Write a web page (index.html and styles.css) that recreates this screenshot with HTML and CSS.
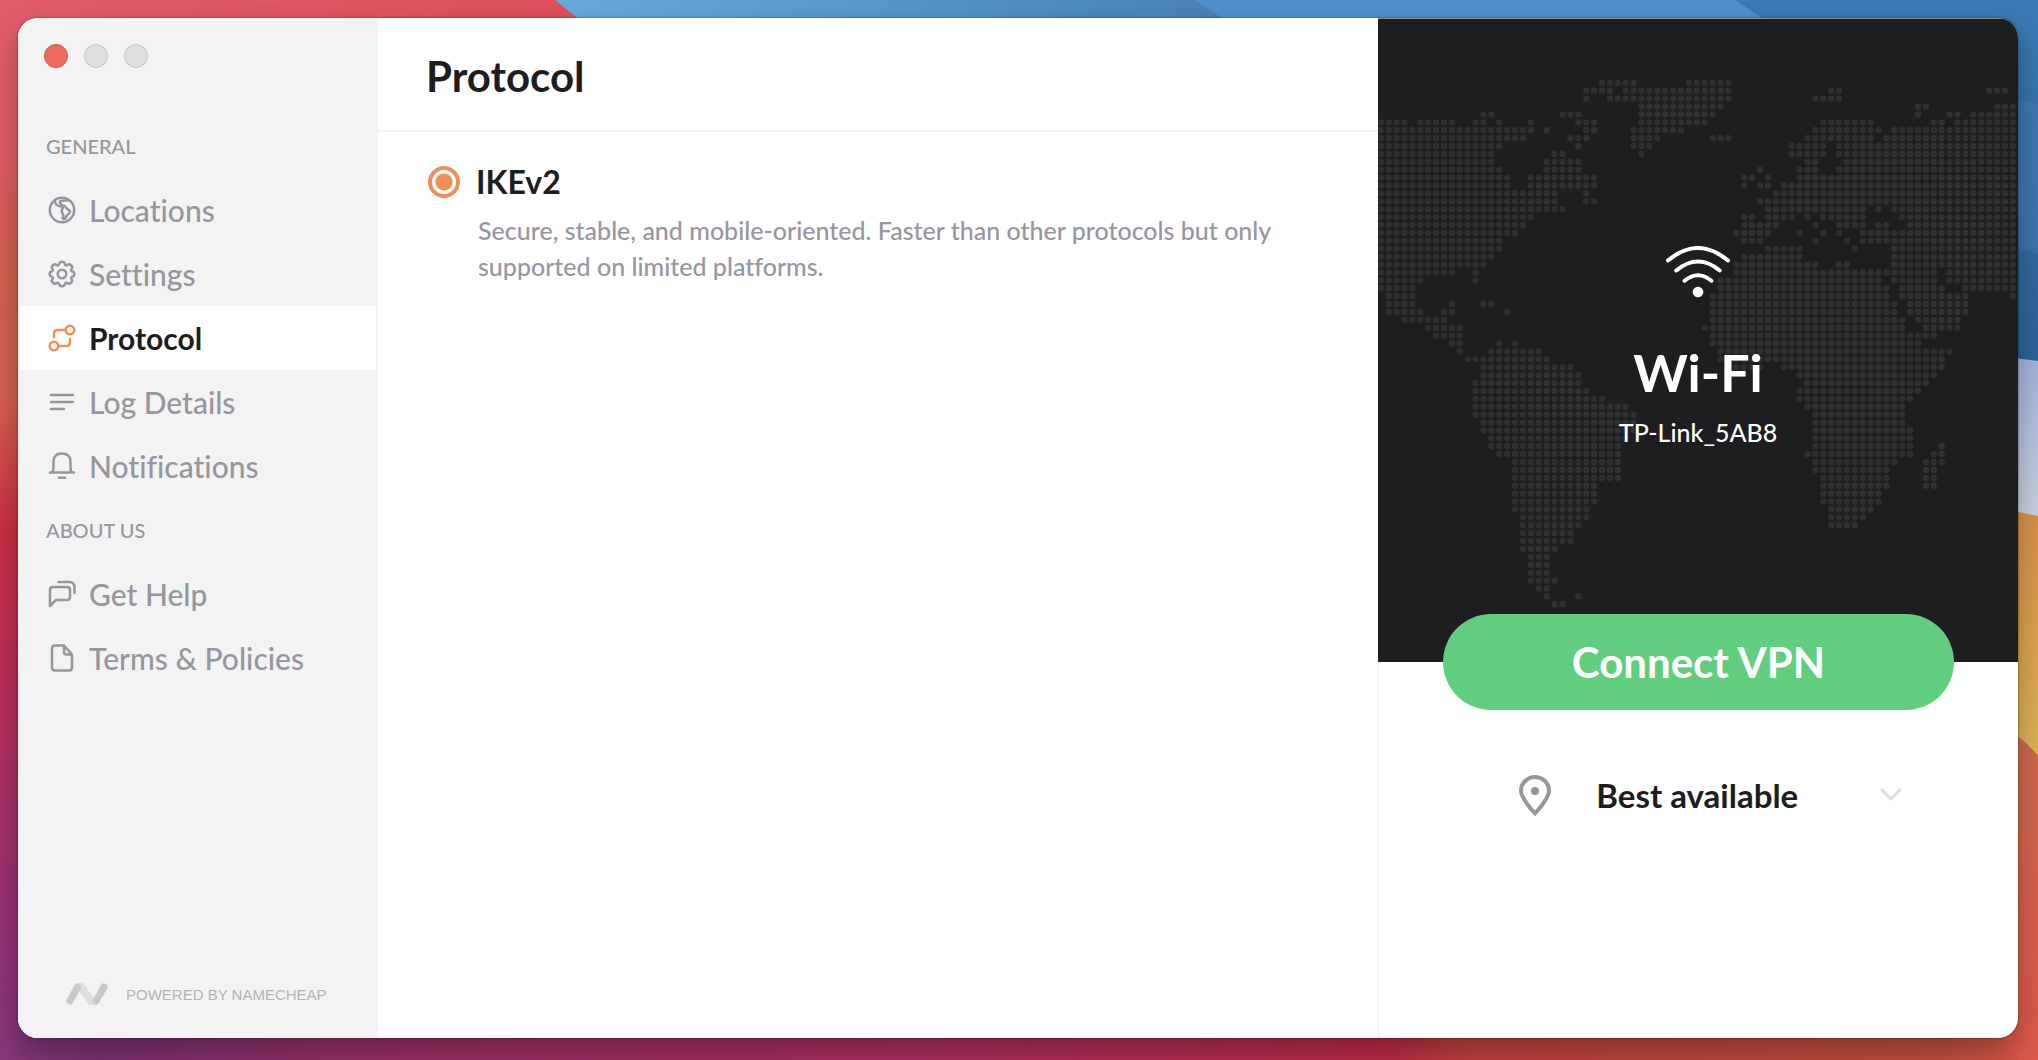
FILE: index.html
```
<!DOCTYPE html>
<html lang="en">
<head>
    <meta charset="UTF-8">
    <meta name="viewport" content="width=device-width, initial-scale=1.0">
    <title>Protocol</title>
    <link rel="stylesheet" href="styles.css">
</head>
<body>
    <svg class="wallpaper" viewBox="0 0 2038 1060" preserveAspectRatio="none" aria-hidden="true">
        <defs>
            <linearGradient id="left" x1="0" y1="0" x2="0" y2="1">
                <stop offset="0" stop-color="#e25d6e"/>
                <stop offset=".12" stop-color="#e05c68"/>
                <stop offset=".26" stop-color="#d4614f"/>
                <stop offset=".38" stop-color="#d6604f"/>
                <stop offset=".5" stop-color="#cb2f43"/>
                <stop offset=".66" stop-color="#b92f5c"/>
                <stop offset=".88" stop-color="#943276"/>
                <stop offset="1" stop-color="#853879"/>
            </linearGradient>
            <linearGradient id="top">
                <stop offset="0" stop-color="#e25d6e"/>
                <stop offset="1" stop-color="#dd4f5a"/>
            </linearGradient>
            <linearGradient id="sky">
                <stop offset="0" stop-color="#68abdd"/>
                <stop offset="1" stop-color="#4580b5"/>
            </linearGradient>
            <linearGradient id="deep" x1="0" y1="0" x2="0" y2="1">
                <stop offset="0" stop-color="#3b7ab5"/>
                <stop offset="1" stop-color="#2d6297"/>
            </linearGradient>
            <linearGradient id="mist" x1="0" y1="0" x2="0" y2="1">
                <stop offset="0" stop-color="#a3b2dc"/>
                <stop offset="1" stop-color="#cdd6e0"/>
            </linearGradient>
            <linearGradient id="sand" x1="0" y1="0" x2="0" y2="1">
                <stop offset="0" stop-color="#d98f48"/>
                <stop offset="1" stop-color="#dcb757"/>
            </linearGradient>
            <linearGradient id="coral" x1="0" y1="0" x2="0" y2="1">
                <stop offset="0" stop-color="#cd6a4d"/>
                <stop offset="1" stop-color="#dc5849"/>
            </linearGradient>
            <linearGradient id="bottom">
                <stop offset="0" stop-color="#853879"/>
                <stop offset=".05" stop-color="#7c3070"/>
                <stop offset=".2" stop-color="#9a3064"/>
                <stop offset=".45" stop-color="#ac2e60"/>
                <stop offset=".68" stop-color="#bb2b46"/>
                <stop offset=".72" stop-color="#c0403f"/>
                <stop offset=".95" stop-color="#c04f3e"/>
                <stop offset="1" stop-color="#dc5849"/>
            </linearGradient>
        </defs>
        <path fill="url(#left)" d="M0 0h1019v1060H0z"/>
        <path fill="url(#top)" d="M0 0h600v30H0z"/>
        <path fill="url(#sky)" d="M555 0h700v30H592z"/>
        <path fill="#5091ca" d="M1195 0h600v40h-540z"/>
        <path fill="url(#deep)" d="M1735 0h303v365l-40-6V60L1795 40z"/>
        <path fill="#4480b8" fill-opacity=".5" d="M2000 98l38 6v150l-38-11z"/>
        <path fill="url(#bottom)" d="M18 1020h2020v40H0z"/>
        <path fill="url(#mist)" d="M2000 356l38 5v170h-38z"/>
        <path fill="url(#sand)" d="M2000 508l38 8v260h-38z"/>
        <path fill="url(#coral)" d="M2000 724q24 14 38 32v304h-20l-18-30z"/>
    </svg>

    <div class="window">
        <aside class="sidebar">
            <div class="window-controls">
                <button class="dot dot-close" aria-label="Close"></button>
                <button class="dot" aria-label="Minimize"></button>
                <button class="dot" aria-label="Zoom"></button>
            </div>

            <nav>
                <h2>GENERAL</h2>
                <a href="#">
                    <svg viewBox="0 0 28 28"><circle cx="14" cy="14" r="12.2"/><path d="M7 5q0 4 4 5l3 .4q1.500.5.300 2.600-1.300 2.500.3 4.500 1.400 1.800 0 4.500.8 1.800 2.700.5 1-3 3.700-5 2-2.200-.3-3.800-2-.7-3-2.700-.5-1.300-3-1.500M20 4.500q-5.500-.3-8 .8-.5 2 1.500 3.200"/></svg>
                    Locations
                </a>
                <a href="#">
                    <svg viewBox="0 0 28 28"><circle cx="14" cy="14" r="4.3"/><path d="M11.700 2.600q2.300-1.600 4.600 0l.9 2.300q.7.900 1.800.3l2.100-1q2.800.5 3.200 3.300l-1.100 2.200q-.3 1.100.8 1.600l1.500.5q1.600 2.200 0 4.400l-1.500.6q-1.100.6-.8 1.600l1.100 2.200q-.5 2.700-3.200 3.200l-2.200-1q-1.100-.4-1.700.6l-.9 2q-2.300 1.600-4.600 0l-.9-2q-.6-1-1.700-.6l-2.200 1q-2.700-.5-3.200-3.200l1.100-2.200q.3-1-.8-1.600l-1.500-.6q-1.600-2.200 0-4.400l1.500-.5q1.100-.5.8-1.600L3.700 7.500q.4-2.800 3.200-3.300l2.100 1q1.100.6 1.800-.3z"/></svg>
                    Settings
                </a>
                <a href="#" class="active" aria-current="page">
                    <svg viewBox="0 0 28 28"><circle cx="22" cy="6" r="4.3"/><circle cx="6" cy="22" r="4.3"/><path d="M17.500 6H9.500Q6 6 6 9.500V13M10.500 22h8q3.500 0 3.500-3.500V15"/></svg>
                    Protocol
                </a>
                <a href="#">
                    <svg viewBox="0 0 28 28"><path d="M3 7h22M3 14h22M3 21h13"/></svg>
                    Log Details
                </a>
                <a href="#">
                    <svg viewBox="0 0 28 28"><path d="M2 20.500h24M4 20.500Q5.500 19 5.500 16v-6q0-8.500 8.500-8.500t8.500 8.500v6q0 3 1.500 4.500M11 25.700h6"/></svg>
                    Notifications
                </a>

                <h2>ABOUT US</h2>
                <a href="#">
                    <svg viewBox="0 0 28 28"><path d="M2 26V10q0-3 3-3h14q3 0 3 3v7q0 3-3 3H8zM10.500 2H21q5.500 0 5.500 5.500V13"/></svg>
                    Get Help
                </a>
                <a href="#">
                    <svg viewBox="0 0 28 28"><path d="M16 1.500H7q-3 0-3 3v19q0 3 3 3h14q3 0 3-3V10.500L16 1.500v6.500q0 2.500 2.500 2.500H24"/></svg>
                    Terms &amp; Policies
                </a>
            </nav>

            <footer>
                <svg viewBox="0 0 42 24" aria-hidden="true">
                    <path stroke="#dedede" d="M13 5l14 14"/>
                    <path fill="#dedede" d="M10 1h5q3 0 5 3.500L31 23h-6q-3 0-4.500-3z"/>
                    <path stroke="#c9c9c9" d="M4 19l7.500-14M30 19l8-14"/>
                </svg>
                <span>POWERED BY NAMECHEAP</span>
            </footer>
        </aside>

        <main>
            <header>
                <h1>Protocol</h1>
            </header>
            <div class="option">
                <input type="radio" id="ikev2" name="protocol" checked>
                <label for="ikev2">IKEv2</label>
                <p>Secure, stable, and mobile-oriented. Faster than other protocols but only supported on limited platforms.</p>
            </div>
        </main>

        <section class="connection">
            <div class="network">
                <!-- one unit = one dot of the map -->
                <svg class="map" viewBox="-.35 -8.2 81 81.3" aria-hidden="true">
                    <path d="M28 0h4.1M39 0h5.1
                        M26 1h3.1M31 1h13.1M57 1h1.1M77 1h2.1
                        M26 2h.1M29 2h15.1M55 2h3.1
                        M33 3h10.1M68 3h1.1M78 3h2.1
                        M13 4h1.1M23 4h2.1M33 4h9.1M68 4h.1M72 4h1.1M75 4h5.1
                        M0 5h3.1M5 5h4.1M12 5h1.1M15 5h.1M19 5h.1M25 5h2.1M33 5h8.1M56 5h6.1M70 5h1.1M73 5h7.1
                        M0 6h19.1M21 6h.1M26 6h1.1M32 6h6.1M55 6h8.1M65 6h15.1
                        M0 7h18.1M24 7h2.1M32 7h3.1M42 7h2.1M54 7h8.1M64 7h16.1
                        M0 8h15.1M25 8h.1M32 8h2.1M52 8h4.1M58 8h22.1
                        M0 9h14.1M22 9h1.1M33 9h.1M52 9h4.1M58 9h22.1
                        M0 10h14.1M21 10h4.1M54 10h1.1M59 10h21.1
                        M0 11h15.1M21 11h4.1M48 11h.1M53 11h2.1M58 11h22.1
                        M0 12h16.1M19 12h8.1M46 12h1.1M49 12h.1M53 12h27.1
                        M0 13h16.1M19 13h8.1M46 13h.1M48 13h1.1M51 13h29.1
                        M0 14h22.1M26 14h.1M50 14h30.1
                        M0 15h22.1M26 15h1.1M48 15h32.1
                        M0 16h23.1M49 16h12.1M63 16h.1M65 16h15.1
                        M0 17h19.1M46 17h1.1M49 17h3.1M54 17h.1M56 17h5.1M66 17h14.1
                        M0 18h18.1M46 18h4.1M55 18h.1M58 18h3.1M63 18h1.1M67 18h13.1
                        M0 19h17.1M45 19h4.1M53 19h.1M56 19h.1M58 19h.1M61 19h19.1
                        M0 20h15.1M46 20h2.1M55 20h.1M59 20h.1M61 20h19.1
                        M0 21h15.1M49 21h4.1M60 21h.1M65 21h15.1
                        M0 22h14.1M46 22h7.1M65 22h15.1
                        M0 23h13.1M45 23h10.1M58 23h1.1M65 23h15.1
                        M0 24h9.1M12 24h.1M45 24h25.1M72 24h8.1
                        M0 25h5.1M12 25h.1M43 25h20.1M65 25h5.1M72 25h8.1
                        M0 26h4.1M43 26h21.1M66 26h5.1M74 26h6.1
                        M1 27h3.1M42 27h22.1M66 27h8.1M80 27h.1
                        M1 28h3.1M9 28h.1M13 28h1.1M42 28h23.1M67 28h7.1
                        M1 29h4.1M8 29h1.1M16 29h.1M42 29h23.1M67 29h7.1
                        M3 30h5.1M42 30h24.1M68 30h5.1
                        M6 31h4.1M41 31h25.1M69 31h4.1
                        M7 32h3.1M42 32h28.1
                        M9 33h1.1M15 33h.1M17 33h.1M42 33h26.1
                        M10 34h.1M14 34h6.1M43 34h29.1
                        M11 35h10.1M43 35h28.1
                        M13 36h11.1M45 36h3.1M51 36h20.1
                        M13 37h12.1M53 37h17.1
                        M12 38h13.1M54 38h15.1
                        M12 39h14.1M53 39h15.1
                        M12 40h16.1M53 40h14.1
                        M12 41h19.1M54 41h12.1
                        M12 42h20.1M55 42h11.1
                        M13 43h19.1M55 43h11.1
                        M13 44h19.1M55 44h12.1
                        M14 45h17.1M55 45h12.1
                        M14 46h16.1M55 46h12.1M71 46h.1
                        M15 47h15.1M54 47h13.1M70 47h1.1
                        M17 48h13.1M55 48h10.1M69 48h2.1
                        M17 49h13.1M55 49h9.1M69 49h1.1
                        M17 50h13.1M56 50h8.1M69 50h1.1
                        M17 51h10.1M56 51h8.1M69 51h1.1
                        M17 52h10.1M56 52h7.1
                        M17 53h10.1M56 53h7.1
                        M17 54h9.1M57 54h5.1
                        M18 55h8.1M57 55h4.1
                        M18 56h7.1M57 56h3.1
                        M18 57h6.1
                        M18 58h6.1
                        M18 59h4.1
                        M19 60h2.1
                        M19 61h2.1
                        M19 62h2.1
                        M19 63h3.1
                        M20 64h1.1
                        M21 65h.1M25 65h.1
                        M22 66h1.1"/>
                </svg>
                <div class="network-info">
                    <svg class="wifi" viewBox="0 0 64 52" aria-hidden="true">
                        <path d="M2 14.500q30-25 60 0M10.300 24.500q21.700-18 43.400 0M18.600 34.700q13.400-11 26.800 0"/>
                        <circle cx="32" cy="46" r="5.3"/>
                    </svg>
                    <strong>Wi-Fi</strong>
                    <span>TP-Link_5AB8</span>
                </div>
            </div>

            <button class="connect">Connect VPN</button>

            <div class="location">
                <svg class="pin" viewBox="0 0 34 42" aria-hidden="true">
                    <path d="M17 39.500Q3 24 3 16.500a14 13.500 0 0 1 28 0Q31 24 17 39.500z"/>
                    <circle cx="17" cy="17" r="4"/>
                </svg>
                <select aria-label="Location">
                    <option>Best available</option>
                </select>
                <svg class="chevron" viewBox="0 0 22 14" aria-hidden="true"><path d="M2 2l9 9 9-9"/></svg>
            </div>
        </section>
    </div>
</body>
</html>
```
FILE: styles.css
```
* {
    box-sizing: border-box;
}

body {
    margin: 0;
    height: 100vh;
    padding: 18px 20px 22px 18px;
    font-family: Lato, "Open Sans", sans-serif;
    font-variant-ligatures: none;
    color: #1d1d1f;
}

h1, h2, p {
    margin: 0;
}

button, select {
    font-family: inherit;
    border: none;
    padding: 0;
    cursor: pointer;
}

.wallpaper {
    position: absolute;
    top: 0;
    left: 0;
    width: 100%;
    height: 100%;
}

.window {
    position: relative;
    display: grid;
    grid-template-columns: 18% 1fr 32%;
    height: 100%;
    background: #fff;
    border-radius: 20px;
    overflow: hidden;
    box-shadow: 0 0 2px rgba(0, 0, 0, 0.6), 0 14px 30px rgba(0, 0, 0, 0.3);
}

/* sidebar */

.sidebar {
    display: flex;
    flex-direction: column;
    background: #f3f3f3;
    border: 2px solid #f3f3f3;
    border-top: none;
}

.window-controls {
    display: flex;
    gap: 16px;
    height: 96px;
    padding: 26px 24px;
}

.dot {
    width: 24px;
    height: 24px;
    border: 1px solid #c4c4c4;
    border-radius: 50%;
    background: #dfdfdf;
}

.dot-close {
    border-color: #d9534a;
    background: #ed6a5e;
}

nav h2 {
    padding-left: 26px;
    font-size: 20px;
    font-weight: 500;
    line-height: 64px;
    color: #96969f;
}

nav a {
    display: flex;
    align-items: center;
    gap: 13px;
    height: 64px;
    padding-left: 28px;
    font-size: 30px;
    font-weight: 500;
    color: #96969f;
    text-decoration: none;
}

nav a svg {
    width: 28px;
    height: 28px;
    fill: none;
    stroke: #96969f;
    stroke-width: 2.5;
    stroke-linecap: round;
    stroke-linejoin: round;
}

nav a.active {
    background: #fff;
    font-weight: 700;
    color: #1d1d1f;
}

nav a.active svg {
    stroke: #f28e57;
}

.sidebar footer {
    display: flex;
    align-items: center;
    gap: 18px;
    margin-top: auto;
    padding: 0 46px 30px;
    font-family: "Liberation Sans", Arial, sans-serif;
    font-size: 15px;
    white-space: nowrap;
    color: #b3b3b3;
}

.sidebar footer svg {
    width: 42px;
    height: 24px;
    fill: none;
    stroke-width: 7;
    stroke-linecap: round;
}

/* protocol list */

header {
    display: flex;
    align-items: center;
    height: 114px;
    padding: 4px 48px 0;
    border-bottom: 2px solid #f3f3f3;
}

h1 {
    font-size: 42px;
    font-weight: 700;
}

.option {
    display: grid;
    grid-template-columns: 32px 1fr;
    align-items: center;
    column-gap: 16px;
    padding: 30px 50px;
}

.option input {
    appearance: none;
    width: 32px;
    height: 32px;
    margin: 0;
    border: 4px solid #f28e57;
    border-radius: 50%;
    background: radial-gradient(circle, #f28e57 8px, #fff 9px);
}

.option label {
    font-size: 32px;
    font-weight: 700;
    line-height: 40px;
}

.option p {
    grid-column: 2;
    padding: 10px 0 0 2px;
    font-size: 25px;
    font-weight: 500;
    line-height: 36px;
    color: #96969f;
}

/* connection panel */

.connection {
    display: flex;
    flex-direction: column;
    align-items: center;
    border-left: 1px solid #eee;
}

.network {
    position: relative;
    width: calc(100% + 1px);
    height: 644px;
    margin-left: -1px;
    background: #1e1e20;
    box-shadow: inset 0 1px #8d8d8a;
}

.map {
    display: block;
    width: 100%;
    fill: none;
    stroke: #303032;
    stroke-width: .8;
    stroke-linecap: round;
    stroke-dasharray: 0 1;
}

.network-info {
    position: absolute;
    inset: 0;
    display: flex;
    flex-direction: column;
    align-items: center;
    padding-top: 228px;
    color: #fff;
}

.wifi {
    width: 64px;
    height: 52px;
    fill: none;
    stroke: #fff;
    stroke-width: 4;
    stroke-linecap: round;
}

.wifi circle {
    fill: #fff;
    stroke: none;
}

.network-info strong {
    margin-top: 42px;
    font-size: 52px;
    line-height: 64px;
}

.network-info span {
    margin-top: 10px;
    font-size: 25px;
    font-weight: 500;
    line-height: 36px;
}

.connect {
    position: relative;
    width: 80%;
    height: 96px;
    margin-top: -48px;
    border-radius: 48px;
    background: #60ce7e;
    font-size: 42px;
    font-weight: 700;
    color: #fff;
}

.location {
    position: relative;
    display: flex;
    align-items: center;
    width: 60%;
    margin: 55px 0 0 23px;
}

.pin {
    width: 34px;
    height: 42px;
    margin-right: 44px;
    fill: none;
    stroke: #969696;
    stroke-width: 4;
}

.pin circle {
    fill: #969696;
    stroke: none;
}

.location select {
    flex: 1;
    height: 60px;
    appearance: none;
    background: transparent;
    font-size: 33px;
    font-weight: 700;
    color: #1d1d1f;
}

.chevron {
    position: absolute;
    right: 0;
    width: 22px;
    height: 14px;
    fill: none;
    stroke: #dedede;
    stroke-width: 3;
    stroke-linecap: round;
    pointer-events: none;
}
```
